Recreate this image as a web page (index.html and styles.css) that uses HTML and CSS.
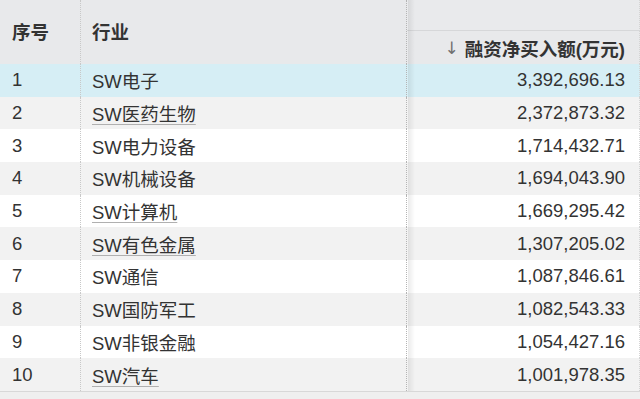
FILE: index.html
```html
<!DOCTYPE html>
<html lang="zh-CN">
<head>
<meta charset="utf-8">
<title>融资净买入额</title>
<link rel="stylesheet" href="styles.css">
</head>
<body>
<div class="wrap">
  <div class="grid">
    <div class="hcell c1 span2">序号</div>
    <div class="hcell c2 span2">行业</div>
    <div class="hcell c3 htop"></div>
    <div class="hcell c3 hsort"><span class="arrow">↓</span>融资净买入额(万元)</div>

    <div class="cell c1 sel">1</div><div class="cell c2 sel">SW电子</div><div class="cell c3 sel">3,392,696.13</div>
    <div class="cell c1 alt">2</div><div class="cell c2 alt"><span class="ul">SW医药生物</span></div><div class="cell c3 alt">2,372,873.32</div>
    <div class="cell c1">3</div><div class="cell c2">SW电力设备</div><div class="cell c3">1,714,432.71</div>
    <div class="cell c1 alt">4</div><div class="cell c2 alt">SW机械设备</div><div class="cell c3 alt">1,694,043.90</div>
    <div class="cell c1">5</div><div class="cell c2"><span class="ul">SW计算机</span></div><div class="cell c3">1,669,295.42</div>
    <div class="cell c1 alt">6</div><div class="cell c2 alt"><span class="ul">SW有色金属</span></div><div class="cell c3 alt">1,307,205.02</div>
    <div class="cell c1">7</div><div class="cell c2">SW通信</div><div class="cell c3">1,087,846.61</div>
    <div class="cell c1 alt">8</div><div class="cell c2 alt">SW国防军工</div><div class="cell c3 alt">1,082,543.33</div>
    <div class="cell c1">9</div><div class="cell c2">SW非银金融</div><div class="cell c3">1,054,427.16</div>
    <div class="cell c1 alt">10</div><div class="cell c2 alt"><span class="ul">SW汽车</span></div><div class="cell c3 alt">1,001,978.35</div>
  </div>
  <div class="shadow"></div>
  <div class="foot"></div>
</div>
</body>
</html>
```
FILE: styles.css
```css
html, body {
  margin: 0;
  padding: 0;
  background: #ffffff;
}
body {
  width: 640px;
  height: 399px;
  overflow: hidden;
  font-family: "Liberation Sans", "Noto Sans CJK SC", sans-serif;
  color: #333333;
}
.wrap {
  position: relative;
  width: 640px;
  height: 399px;
  background: #ffffff;
}
.grid {
  display: grid;
  grid-template-columns: 81px 326px 229px 4px;
  grid-template-rows: 31px 33px repeat(10, 32.7px);
  font-size: 18.5px;
}
.grid > .c3 { grid-column: 3 / 5; }
.hcell {
  background: #e8e9eb;
  font-weight: bold;
  display: flex;
  align-items: center;
}
.span2 { grid-row: span 2; }
.c1 {
  padding-left: 12px;
  border-right: 1px dotted #c8c8c8;
}
.c2 {
  padding-left: 11px;
  border-right: 1px dotted #b4b4b4;
}
.c3 {
  justify-content: flex-end;
  padding-right: 14px;
  border-right: 1px dotted #d4d4d4;
}
.span2 { padding-bottom: 3px; }
.htop {
  border-bottom: 1px solid #d6d7d9;
  background: #e9eaec;
}
.hsort {
  padding-top: 1px;
}
.arrow {
  font-family: "DejaVu Sans", sans-serif;
  font-weight: normal;
  font-size: 17px;
  color: #707070;
  margin-right: 6px;
}
.cell {
  display: flex;
  align-items: center;
  background: #ffffff;
}
.cell.alt { background: #f2f2f2; }
.cell.sel { background: #d6eef5; }
.ul {
  text-decoration: underline;
  text-decoration-color: #b0b0b0;
  text-underline-offset: 3px;
  text-decoration-thickness: 1px;
}
.shadow {
  position: absolute;
  left: 408px;
  top: 0;
  width: 7px;
  height: 391px;
  background: linear-gradient(to right, rgba(0,0,0,0.08), rgba(0,0,0,0));
}
.foot {
  height: 8px;
  border-top: 1px solid #d8d8d8;
  background: #efefef;
}
```
